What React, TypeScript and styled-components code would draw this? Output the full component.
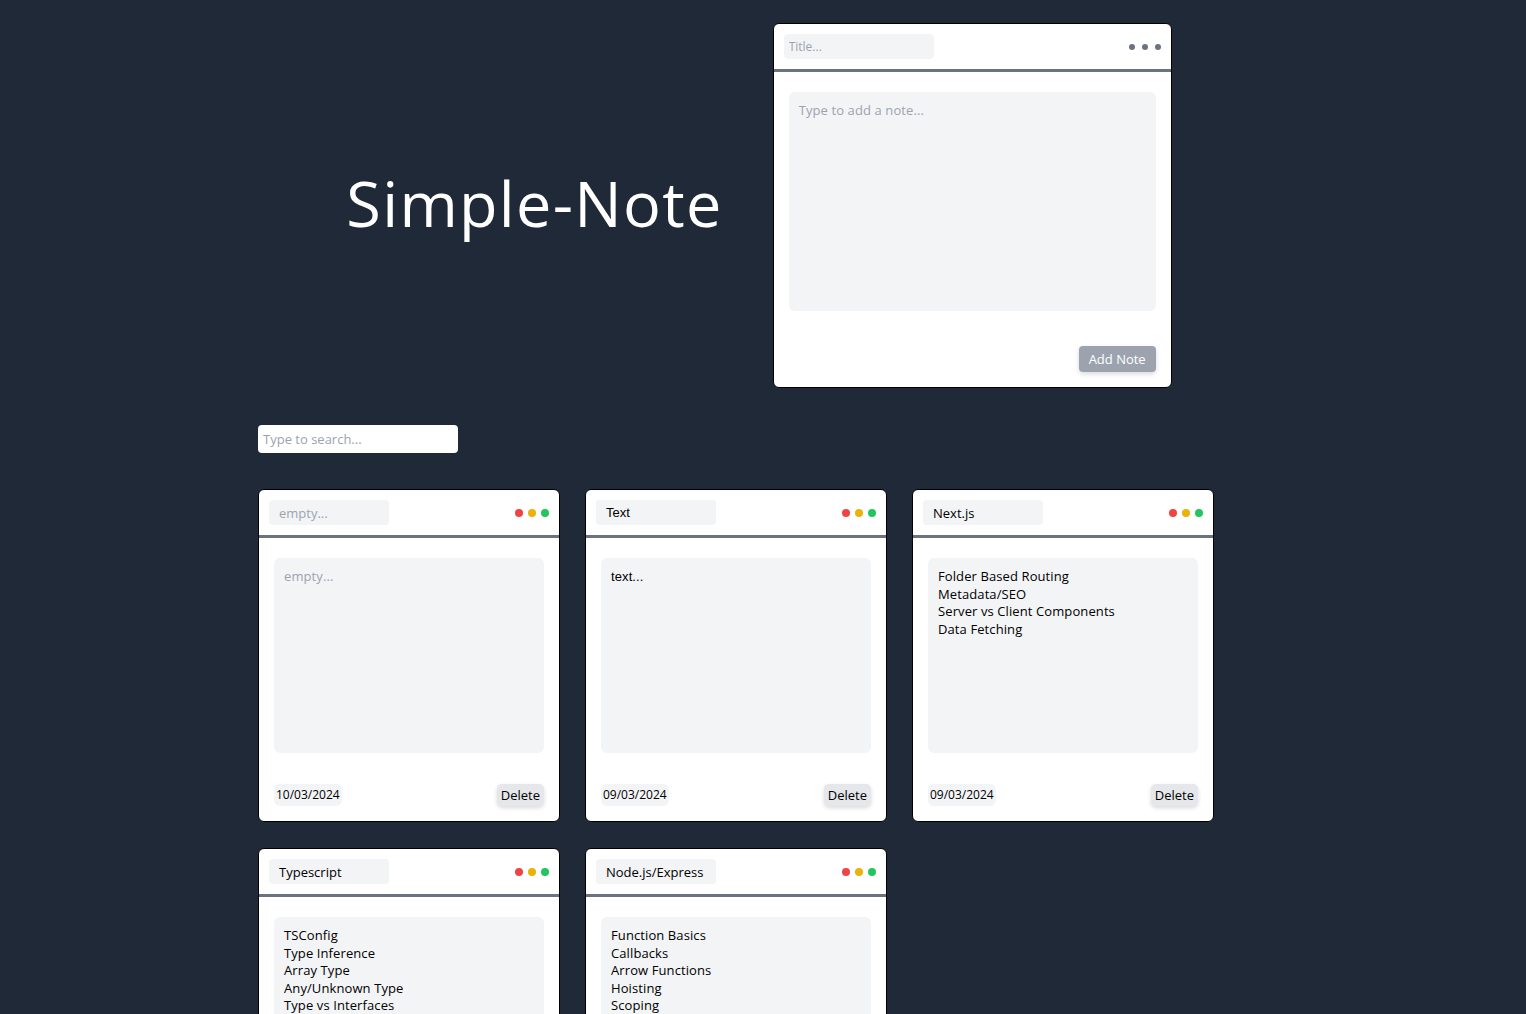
import React from "react";
import styled, { createGlobalStyle } from "styled-components";

const FONT = `"Open Sans", "Noto Sans", sans-serif`;
const ARIAL = `"Liberation Sans", Arial, sans-serif`;

const Global = createGlobalStyle`
  * { box-sizing: border-box; }
  html, body { margin: 0; padding: 0; }
  body {
    background: #1f2937;
    font-family: ${FONT};
    color: #000;
  }
  input, textarea, button { font-family: ${FONT}; }
  ::placeholder { color: #9ca3af; opacity: 1; }
`;

const Page = styled.main`
  padding-top: 23px;
  min-height: 1014px;
`;

const Hero = styled.section`
  display: flex;
  justify-content: center;
  align-items: center;
  gap: 50px;
  padding-right: 8px;
`;

const Heading = styled.h1`
  margin: 0;
  padding-bottom: 6px;
  font-family: ${FONT};
  font-weight: 400;
  font-size: 63px;
  letter-spacing: 1.3px;
  color: #ffffff;
  line-height: 1;
`;

const Card = styled.div<{ $w: number }>`
  width: ${(p) => p.$w}px;
  background: #ffffff;
  border: 1px solid #000;
  border-radius: 6px;
  overflow: hidden;
  display: flex;
  flex-direction: column;
`;

const CardHeader = styled.div`
  display: flex;
  justify-content: space-between;
  align-items: center;
  padding: 10px 10px 10px;
  border-bottom: 3px solid #6b7280;
`;

const TitleInput = styled.input<{ $w: number; $arial?: boolean; $size?: number; $pad?: number }>`
  width: ${(p) => p.$w}px;
  height: 25px;
  border: none;
  outline: none;
  background: #f3f4f6;
  border-radius: 4px;
  padding: 0 ${(p) => p.$pad ?? 10}px;
  font-size: ${(p) => p.$size ?? 13}px;
  font-family: ${(p) => (p.$arial ? ARIAL : FONT)};
  color: #000;
`;

const Dots = styled.div`
  display: flex;
  gap: 5px;
  align-items: center;
`;

const Dot = styled.span<{ $c: string; $d: number }>`
  width: ${(p) => p.$d}px;
  height: ${(p) => p.$d}px;
  border-radius: 50%;
  background: ${(p) => p.$c};
  display: block;
`;

const GrayDots = styled(Dots)`
  gap: 7px;
`;

const CardBody = styled.div`
  padding: 20px 15px 15px;
  display: flex;
  flex-direction: column;
`;

const NoteArea = styled.textarea<{ $h: number; $arial?: boolean }>`
  width: 100%;
  height: ${(p) => p.$h}px;
  border: none;
  outline: none;
  resize: none;
  background: #f3f4f6;
  border-radius: 6px;
  padding: 10px;
  font-size: 13px;
  line-height: 17.5px;
  letter-spacing: 0.1px;
  font-family: ${(p) => (p.$arial ? ARIAL : FONT)};
  color: #000;
  overflow: hidden;
  display: block;
`;

const Footer = styled.div<{ $top: number }>`
  margin-top: ${(p) => p.$top}px;
  display: flex;
  justify-content: space-between;
  align-items: center;
`;

const DatePill = styled.span`
  background: #f3f4f6;
  border-radius: 6px;
  padding: 2px 2px;
  font-size: 12px;
  line-height: 18px;
  color: #000;
`;

const DeleteButton = styled.button`
  border: none;
  background: #e5e7eb;
  border-radius: 5px;
  padding: 0 4px;
  height: 22px;
  font-size: 13px;
  color: #000;
  box-shadow: 0 2px 4px rgba(0, 0, 0, 0.15);
  cursor: pointer;
`;

const AddButton = styled.button`
  border: none;
  background: #9ca3af;
  color: #ffffff;
  border-radius: 4px;
  height: 26px;
  padding: 0 10px;
  font-size: 13px;
  box-shadow: 0 2px 5px rgba(0, 0, 0, 0.15);
  cursor: pointer;
`;

const Container = styled.section`
  width: 1010px;
  margin: 37px auto 0;
`;

const Search = styled.input`
  width: 200px;
  height: 28px;
  border: none;
  outline: none;
  border-radius: 4px;
  background: #ffffff;
  padding: 0 5px;
  font-size: 13px;
  display: block;
`;

const Grid = styled.div`
  margin-top: 36px;
  display: grid;
  grid-template-columns: repeat(3, 302px);
  column-gap: 25px;
  row-gap: 26px;
`;

type Note = { title: string; text: string; date: string; arial?: boolean };

const notes: Note[] = [
  { title: "", text: "", date: "10/03/2024" },
  { title: "Text", text: "text...", date: "09/03/2024", arial: true },
  {
    title: "Next.js",
    text: "Folder Based Routing\nMetadata/SEO\nServer vs Client Components\nData Fetching",
    date: "09/03/2024",
  },
  {
    title: "Typescript",
    text: "TSConfig\nType Inference\nArray Type\nAny/Unknown Type\nType vs Interfaces",
    date: "08/03/2024",
  },
  {
    title: "Node.js/Express",
    text: "Function Basics\nCallbacks\nArrow Functions\nHoisting\nScoping",
    date: "08/03/2024",
  },
];

function NoteCard({ note }: { note: Note }) {
  return (
    <Card $w={302}>
      <CardHeader>
        <TitleInput
          $w={120}
          $arial={note.arial}
          placeholder="empty..."
          defaultValue={note.title}
        />
        <Dots>
          <Dot $c="#ef4444" $d={8} />
          <Dot $c="#eab308" $d={8} />
          <Dot $c="#22c55e" $d={8} />
        </Dots>
      </CardHeader>
      <CardBody>
        <NoteArea
          $h={195}
          $arial={note.arial}
          placeholder="empty..."
          defaultValue={note.text}
        />
        <Footer $top={31}>
          <DatePill>{note.date}</DatePill>
          <DeleteButton>Delete</DeleteButton>
        </Footer>
      </CardBody>
    </Card>
  );
}

export default function App() {
  return (
    <>
      <Global />
      <Page>
        <Hero>
          <Heading>Simple-Note</Heading>
          <Card $w={399}>
            <CardHeader>
              <TitleInput $w={150} $size={12} $pad={5} placeholder="Title..." />
              <GrayDots>
                <Dot $c="#6b7280" $d={6} />
                <Dot $c="#6b7280" $d={6} />
                <Dot $c="#6b7280" $d={6} />
              </GrayDots>
            </CardHeader>
            <CardBody>
              <NoteArea $h={219} placeholder="Type to add a note..." />
              <Footer $top={35}>
                <span />
                <AddButton>Add Note</AddButton>
              </Footer>
            </CardBody>
          </Card>
        </Hero>
        <Container>
          <Search placeholder="Type to search..." />
          <Grid>
            {notes.map((n, i) => (
              <NoteCard key={i} note={n} />
            ))}
          </Grid>
        </Container>
      </Page>
    </>
  );
}
